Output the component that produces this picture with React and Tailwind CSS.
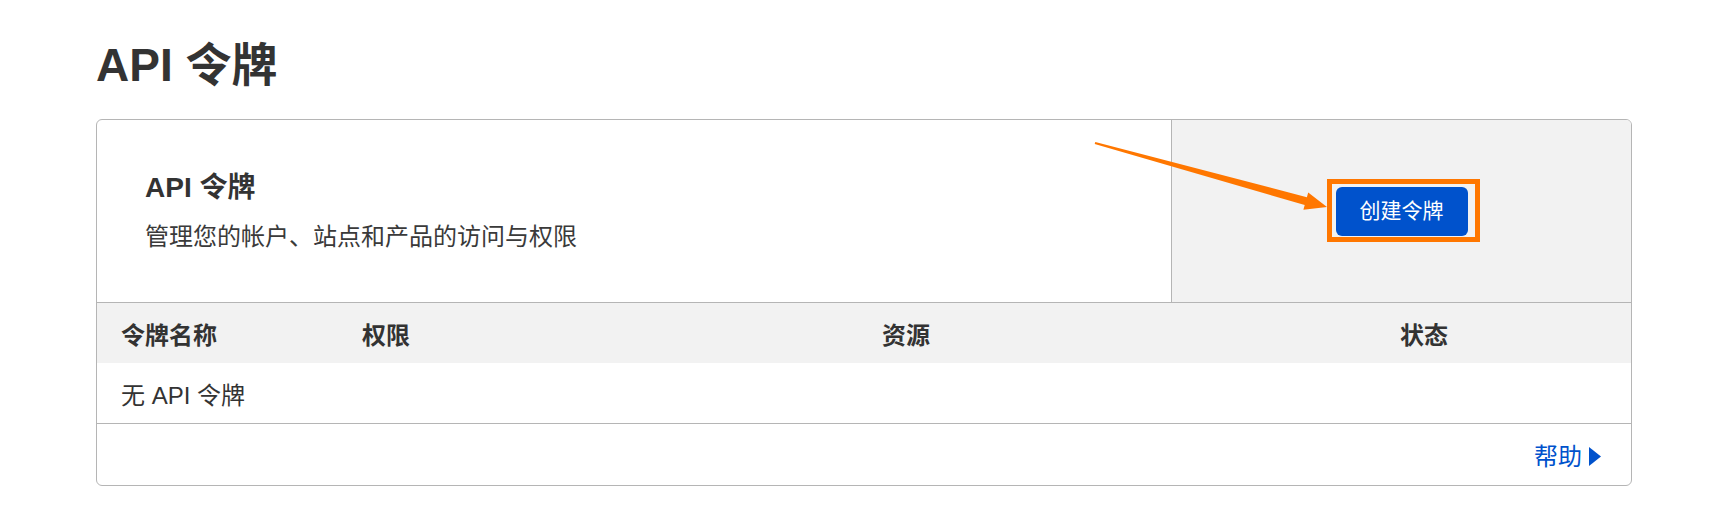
import React from "react";

const font = {
  fontFamily: '"Liberation Sans", "Noto Sans CJK SC", sans-serif',
};

function Arrow() {
  // tapered annotation arrow pointing at the create button
  return (
    <svg
      className="pointer-events-none absolute left-0 top-0"
      width="1728"
      height="508"
      viewBox="0 0 1728 508"
    >
      <polygon
        fill="#ff7700"
        points="1095.3,141.9 1306.9,197.2 1308.2,192.4 1327,207 1303.4,209.8 1304.7,205 1094.7,144.1"
      />
    </svg>
  );
}

function TokenTable() {
  const headers = ["令牌名称", "权限", "资源", "状态"];
  return (
    <>
      <div className="grid h-[60px] grid-cols-[241px_520px_518px_1fr] items-center bg-[#f2f2f2] pt-[6px]">
        {headers.map((h) => (
          <div
            key={h}
            className="px-6 text-[24px] font-bold leading-[32px] text-[#333333]"
          >
            {h}
          </div>
        ))}
      </div>
      <div className="flex h-[61px] items-center border-b border-[#b5b5b5] px-6 pt-[5px] text-[24px] leading-[32px] text-[#333333]">
        无 API 令牌
      </div>
    </>
  );
}

export default function App() {
  return (
    <div className="relative h-[508px] w-[1728px] bg-white" style={font}>
      <div className="pl-[96px] pt-[41px]">
        <h1 className="text-[46px] font-semibold leading-[48px] text-[#333333]">
          API 令牌
        </h1>

        <div className="mt-[30px] w-[1536px] overflow-hidden rounded-md border border-[#b5b5b5]">
          <div className="flex h-[183px] border-b border-[#b5b5b5]">
            <div className="flex flex-1 flex-col justify-center pl-12">
              <h2 className="text-[28px] font-bold leading-[36px] text-[#333333]">
                API 令牌
              </h2>
              <p className="mt-[15px] text-[24px] leading-[32px] text-[#3a3a3a]">
                管理您的帐户、站点和产品的访问与权限
              </p>
            </div>
            <div className="flex w-[460px] items-center justify-center border-l border-[#b5b5b5] bg-[#f2f2f2]">
              <span className="relative">
                <button className="flex h-[49px] w-[132px] items-center justify-center rounded-md bg-[#0052cc] text-[21px] text-white">
                  创建令牌
                </button>
                <span className="pointer-events-none absolute -bottom-[6px] -left-[9px] -right-[12px] -top-[8px] border-[5px] border-[#ff7700]" />
              </span>
            </div>
          </div>

          <TokenTable />

          <div className="flex h-[61px] items-center justify-end pr-[30px] pt-[4px]">
            <a className="flex items-center gap-[7px] text-[24px] leading-[32px] text-[#0052cc]">
              帮助
              <svg width="12" height="19" viewBox="0 0 12 19">
                <polygon points="0,0 12,9.5 0,19" fill="#0052cc" />
              </svg>
            </a>
          </div>
        </div>
      </div>
      <Arrow />
    </div>
  );
}
